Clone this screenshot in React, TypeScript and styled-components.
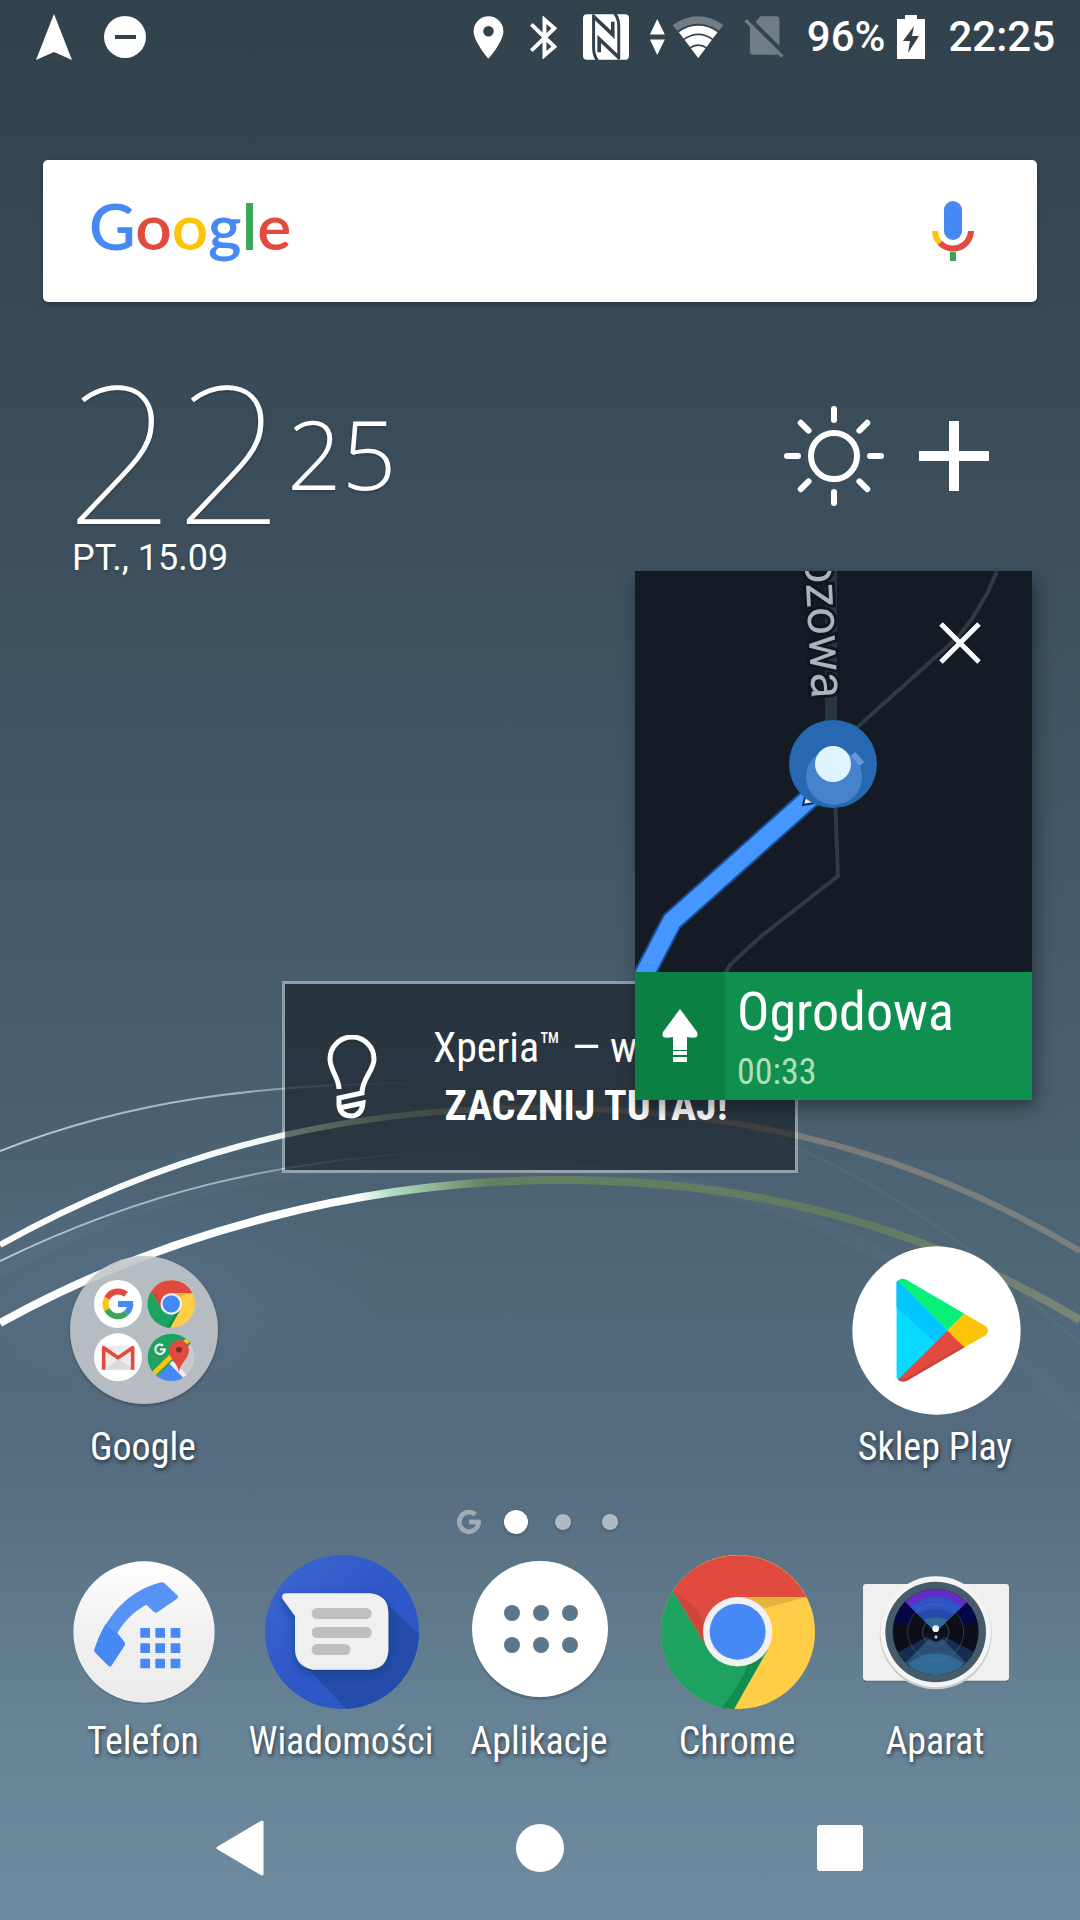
import React from "react";
import styled, { createGlobalStyle } from "styled-components";

const condensed = '"Roboto Condensed", Roboto, "Noto Sans", sans-serif';

const GlobalStyle = createGlobalStyle`
  * { box-sizing: border-box; }
  body { margin: 0; background: #33434d; }
  svg { display: block; flex: none; }
  button { border: 0; padding: 0; margin: 0; background: none; color: inherit; font: inherit; cursor: pointer; }
`;

const Screen = styled.main`
  position: relative;
  isolation: isolate;
  display: flex;
  flex-direction: column;
  min-height: 100vh;
  overflow: hidden;
  color: #fff;
  font-family: Roboto, "Noto Sans", sans-serif;
  background: linear-gradient(#32424c 0%, #3b4c59 22%, #445867 45%, #4a6070 58%, #506878 68%, #566d82 77%, #5c7486 81%, #678396 90%, #6f8b9f 100%);
`;

const Wallpaper = styled.svg`
  position: absolute;
  inset: 0;
  z-index: -1;
  width: 100%;
  height: 100%;
`;

const StatusBar = styled.header`
  display: flex;
  align-items: center;
  justify-content: space-between;
  height: 74px;
  padding: 0 25px 0 36px;
`;

const StatusGroup = styled.div<{ $gap: number }>`
  display: flex;
  align-items: center;
  gap: ${(p) => p.$gap}px;
`;

const StatusText = styled.span`
  font-size: 42px;
  line-height: 48px;
  font-weight: 500;
`;

const SearchBar = styled.form`
  display: flex;
  align-items: center;
  height: 142px;
  margin: 86px 43px 0;
  padding: 0 62px 0 46px;
  border-radius: 5px;
  background: #fff;
  box-shadow: 0 2px 5px rgba(0, 0, 0, 0.3);
`;

const Wordmark = styled.label`
  padding-bottom: 10px;
  font-family: Lato, sans-serif;
  font-size: 64px;
  line-height: 80px;
  font-weight: 600;
`;

const Letter = styled.span<{ $color: string }>`
  color: ${(p) => p.$color};
`;

const SearchInput = styled.input`
  flex: 1;
  min-width: 0;
  height: 80px;
  margin: 0 24px;
  border: 0;
  outline: 0;
  background: transparent;
  font-family: Roboto, sans-serif;
  font-size: 36px;
`;

const ClockWidget = styled.section`
  padding: 0 91px 0 66px;
  margin-top: 82px;
`;

const ClockRow = styled.div`
  display: flex;
  align-items: center;
  height: 144px;
`;

const Hours = styled.span`
  padding-bottom: 12px;
  font-family: "Noto Sans", "Open Sans", sans-serif;
  font-size: 192px;
  line-height: 144px;
  font-weight: 100;
  text-shadow: 0 1px 3px rgba(0, 0, 0, 0.3);
`;

const Minutes = styled.span`
  padding-bottom: 6px;
  margin-left: 2px;
  font-family: "Open Sans", "Noto Sans", sans-serif;
  font-size: 96px;
  line-height: 96px;
  font-weight: 300;
  text-shadow: 0 1px 3px rgba(0, 0, 0, 0.3);
`;

const ClockActions = styled.div`
  display: flex;
  align-items: center;
  gap: 35px;
  margin-left: auto;
`;

const DateLine = styled.p`
  margin: 10px 0 0 6px;
  font-size: 36px;
  line-height: 40px;
  text-shadow: 0 1px 3px rgba(0, 0, 0, 0.3);
`;

const Spacer = styled.div`
  flex: 1;
`;

const TipCard = styled.button`
  display: flex;
  align-items: center;
  align-self: center;
  width: 516px;
  height: 192px;
  padding: 0 56px 0 42px;
  border: 3px solid rgba(255, 255, 255, 0.4);
  background: rgba(20, 27, 34, 0.6);
  background-clip: padding-box;
  color: #fff;
`;

const TipText = styled.span`
  flex: 1;
  display: flex;
  flex-direction: column;
  margin-left: 56px;
  font-family: ${condensed};
  font-size: 42px;
  line-height: 58px;
  white-space: nowrap;
  text-align: left;
`;

const TipStrong = styled.strong`
  text-align: center;
  font-weight: 700;
`;

const AppRow = styled.nav<{ $top: number }>`
  display: grid;
  grid-template-columns: repeat(5, minmax(0, 1fr));
  margin-top: ${(p) => p.$top}px;
  padding: 0 45px;
`;

const AppButton = styled.button<{ $column?: number }>`
  display: flex;
  flex-direction: column;
  align-items: center;
  ${(p) => (p.$column ? `grid-column: ${p.$column};` : "")}
`;

const IconSlot = styled.span<{ $size: number }>`
  display: flex;
  align-items: center;
  justify-content: center;
  height: ${(p) => p.$size}px;
`;

const AppLabel = styled.span`
  margin-top: 8px;
  padding-right: 2px;
  font-family: ${condensed};
  font-size: 38px;
  line-height: 48px;
  white-space: nowrap;
  text-shadow: 1px 2px 4px rgba(0, 0, 0, 0.6);
`;

const Pager = styled.div`
  display: grid;
  grid-template-columns: repeat(4, 47px);
  align-items: center;
  justify-items: center;
  justify-content: center;
  height: 26px;
  margin-top: 38px;
  padding-right: 2px;
`;

const PageDot = styled.button<{ $active?: boolean }>`
  width: ${(p) => (p.$active ? 24 : 16)}px;
  height: ${(p) => (p.$active ? 24 : 16)}px;
  border-radius: 50%;
  background: ${(p) => (p.$active ? "#fff" : "#b0bac3")};
  box-shadow: 0 1px 3px rgba(0, 0, 0, 0.3);
`;

const NavBar = styled.footer`
  display: grid;
  grid-template-columns: repeat(3, 300px);
  justify-content: center;
  align-items: center;
  height: 144px;
  margin-top: 11px;
`;

const NavButton = styled.button`
  display: flex;
  align-items: center;
  justify-content: center;
  height: 100%;
`;

const FloatingMap = styled.aside`
  position: absolute;
  top: 571px;
  right: 48px;
  width: 397px;
  box-shadow: 4px 8px 18px rgba(0, 0, 0, 0.38);
`;

const CloseButton = styled.button`
  position: absolute;
  top: 36px;
  right: 36px;
  display: flex;
  align-items: center;
  justify-content: center;
  width: 72px;
  height: 72px;
`;

const Directions = styled.div`
  display: flex;
  height: 128px;
  background: #0f904f;
`;

const TurnCell = styled.div`
  display: flex;
  align-items: center;
  justify-content: center;
  width: 90px;
  background: #0c8043;
`;

const StreetCell = styled.div`
  padding: 8px 0 0 12px;
  font-family: ${condensed};
`;

const Street = styled.div`
  font-size: 54px;
  line-height: 64px;
`;

const Eta = styled.div`
  font-size: 36px;
  line-height: 56px;
  color: #b0deb9;
`;

const BLUE = "#4688f4";
const RED = "#e04a3f";
const YELLOW = "#fdc409";
const GREEN = "#3aa757";

function WallpaperArt() {
  return (
    <Wallpaper viewBox="0 0 1080 1920" preserveAspectRatio="none" aria-hidden="true">
      <defs>
        <linearGradient id="arcThin" gradientUnits="userSpaceOnUse" x1="0" y1="0" x2="480" y2="0">
          <stop offset="0" stopColor="#b9c5cf" />
          <stop offset="0.5" stopColor="#9fb2c1" />
          <stop offset="1" stopColor="#51697c" stopOpacity="0" />
        </linearGradient>
        <linearGradient id="arcUpper" gradientUnits="userSpaceOnUse" x1="0" y1="0" x2="1080" y2="0">
          <stop offset="0" stopColor="#fff" />
          <stop offset="0.25" stopColor="#f2f6f4" />
          <stop offset="0.36" stopColor="#8ea48d" />
          <stop offset="0.48" stopColor="#7b7772" />
          <stop offset="1" stopColor="#7c7f7f" />
        </linearGradient>
        <linearGradient id="arcLower" gradientUnits="userSpaceOnUse" x1="0" y1="0" x2="1080" y2="0">
          <stop offset="0" stopColor="#fff" />
          <stop offset="0.33" stopColor="#fff" />
          <stop offset="0.36" stopColor="#b5e0c8" />
          <stop offset="0.45" stopColor="#64805f" />
          <stop offset="0.8" stopColor="#607a62" />
          <stop offset="1" stopColor="#7b8578" />
        </linearGradient>
        <radialGradient id="glow">
          <stop offset="0" stopColor="#5d7695" stopOpacity="0.4" />
          <stop offset="1" stopColor="#5d7695" stopOpacity="0" />
        </radialGradient>
      </defs>
      <ellipse cx="130" cy="1280" rx="260" ry="110" fill="url(#glow)" />
      <g fill="none">
        <path d="M0 1272C160 1180 330 1152 540 1166S900 1225 1080 1420" stroke="#6b8799" strokeOpacity="0.12" strokeWidth="12" />
        <path d="M700 1110C850 1160 960 1230 1080 1345" stroke="#6f8ba0" strokeOpacity="0.16" strokeWidth="3" />
        <path d="M0 1151C120 1104 250 1080 480 1083" stroke="url(#arcThin)" strokeWidth="2" />
        <path d="M0 1261C130 1198 270 1156 480 1150" stroke="url(#arcThin)" strokeWidth="2" />
        <path d="M0 1245C150 1161 320 1108 540 1108S930 1160 1080 1251" stroke="url(#arcUpper)" strokeWidth="6" />
        <path d="M0 1323C170 1229 370 1180 560 1180S920 1224 1080 1320" stroke="url(#arcLower)" strokeWidth="8" />
      </g>
    </Wallpaper>
  );
}

/* Multi-coloured G mark; centred on 0,0 with an outer radius of 46. */
function GMark({ colors }: { colors: [string, string, string, string] }) {
  const [red, yellow, green, blue] = colors;
  return (
    <g fill="none" strokeWidth="18">
      <path d="M24 -29A37 37 0 0 0 -33 -17" stroke={red} />
      <path d="M-33 -17A37 37 0 0 0 -33 17" stroke={yellow} />
      <path d="M-33 17A37 37 0 0 0 24 28" stroke={green} />
      <path d="M24 28A37 37 0 0 0 37 0" stroke={blue} />
      <path d="M0 0H45" stroke={blue} />
    </g>
  );
}

/* Chrome mark; centred on 595,426 with a radius of 231. */
function ChromeMark() {
  return (
    <g>
      <circle cx="595" cy="426" r="231" fill="#ffcd46" />
      <path d="M400 302L505 478L595 530L685 478L583 657A231 231 0 0 1 400 302Z" fill="#1da260" />
      <path d="M400 302A231 231 0 0 1 800 321H595V426L505 478Z" fill="#e04a3f" />
      <path d="M595 321H800L670 356Z" fill="#dcae3c" opacity="0.8" />
      <path d="M400 302L495 460L490 420Q492 370 440 330Z" fill="#b9423a" opacity="0.5" />
      <path d="M672 500L583 657L545 655Q600 590 625 522Z" fill="#0a864a" opacity="0.7" />
      <circle cx="594" cy="425" r="104" fill="#f1f1f1" />
      <circle cx="594" cy="425" r="84" fill="#4688f4" />
    </g>
  );
}

function FolderIcon() {
  return (
    <svg width="148" height="148" viewBox="90 79 444 444" overflow="visible">
      <defs>
        <clipPath id="mapsClip"><circle cx="394" cy="383" r="71" /></clipPath>
        <filter id="soft" x="-20%" y="-20%" width="140%" height="140%">
          <feDropShadow dx="0" dy="4" stdDeviation="5" floodOpacity="0.35" />
        </filter>
      </defs>
      <circle cx="312" cy="301" r="222" fill="#c5c9cd" fillOpacity="0.86" filter="url(#soft)" />
      <circle cx="234" cy="223" r="72" fill="#fff" />
      <g transform="translate(234 223)"><GMark colors={[RED, YELLOW, GREEN, BLUE]} /></g>
      <g transform="translate(394 223) scale(0.309) translate(-595 -426)"><ChromeMark /></g>
      <circle cx="234" cy="383" r="72" fill="#fff" />
      <path d="M186 348H282V420H186Z" fill="#ececec" />
      <path d="M196 420L234 388L282 420Z" fill="#dcdcdc" />
      <path d="M191 420V354L234 384L278 354V420" fill="none" stroke={RED} strokeWidth="11" strokeLinejoin="round" />
      <g clipPath="url(#mapsClip)">
        <rect x="320" y="310" width="148" height="148" fill="#1da260" />
        <path d="M345 458L480 310V458Z" fill="#c8cacc" />
        <path d="M345 445L395 398L455 458H330Z" fill="#4688f4" />
        <path d="M340 433L450 325" stroke={YELLOW} strokeWidth="15" />
        <path d="M393 398L450 455" stroke="#eee" strokeWidth="13" />
        <path d="M417 428C413 398 387 388 387 361A30 30 0 0 1 447 361C447 388 421 398 417 428Z" fill={RED} />
        <circle cx="417" cy="360" r="9" fill="#77322e" />
        <g transform="translate(360 359) scale(0.38)"><GMark colors={["#eee", "#eee", "#eee", "#eee"]} /></g>
      </g>
    </svg>
  );
}

function PlayStoreIcon() {
  return (
    <svg width="169" height="169" viewBox="94 77 508 508">
      <circle cx="348" cy="331" r="253" fill="#fff" />
      <path d="M228 187Q228 180 234 182L381 331L236 478Q228 480 228 470Z" fill="#06dbff" />
      <path d="M228 187Q228 180 234 182L381 331L345 367L228 262Z" fill="#03c5ff" />
      <path d="M232 181Q242 172 256 178L432 281L381 331Z" fill="#08ef7a" />
      <path d="M432 281L496 318Q510 331 496 345L432 381L381 331Z" fill={YELLOW} />
      <path d="M381 331L432 381L260 481Q244 488 232 479Z" fill={RED} />
      <path d="M428 377L432 381L260 481Q244 488 232 479L240 474Q248 479 258 474Z" fill="#c7443a" />
    </svg>
  );
}

function PhoneIcon() {
  return (
    <svg width="142" height="142" viewBox="98 213 426 426" overflow="visible">
      <defs>
        <linearGradient id="phoneFace" x1="0" y1="0" x2="0" y2="1">
          <stop offset="0" stopColor="#fff" /><stop offset="0.5" stopColor="#f0f0f0" /><stop offset="1" stopColor="#ececec" />
        </linearGradient>
      </defs>
      <circle cx="311" cy="429" r="213" fill="#3f5362" opacity="0.35" />
      <circle cx="311" cy="426" r="212" fill="url(#phoneFace)" />
      <path d="M358 278Q367 274 374 281L411 316Q416 321 409 327L351 367Q346 370 341 366L318 344C280 364 248 397 231 430L252 456Q256 461 252 467L213 527Q208 532 203 526L164 487Q160 482 163 476C200 370 270 300 358 278Z" fill="#5792f5" />
      <path d="M195 403L231 430L252 456Q256 461 252 467L213 527Q208 532 203 526L164 487Q160 482 163 476Q175 438 195 403Z" fill={BLUE} />
      {[414, 460, 506].map((y) =>
        [300, 345, 391].map((x) => <rect key={`${x}-${y}`} x={x} y={y} width="29" height="29" rx="2" fill={BLUE} />)
      )}
    </svg>
  );
}

function MessagesIcon() {
  return (
    <svg width="154" height="154" viewBox="675 195 462 462">
      <defs>
        <clipPath id="msgClip"><circle cx="906" cy="426" r="231" /></clipPath>
        <linearGradient id="msgFace" x1="0" y1="0" x2="1" y2="1">
          <stop offset="0" stopColor="#3d68ce" /><stop offset="0.5" stopColor="#2e57c8" />
        </linearGradient>
        <filter id="msgShadow" x="-20%" y="-20%" width="140%" height="150%">
          <feDropShadow dx="0" dy="12" stdDeviation="14" floodColor="#123a7a" floodOpacity="0.6" />
        </filter>
      </defs>
      <g clipPath="url(#msgClip)">
        <rect x="675" y="195" width="462" height="462" fill="url(#msgFace)" />
        <path d="M1030 330L1170 465V690H950L790 522Z" fill="#244ca9" />
        <path d="M738 310H990Q1045 316 1045 368V484Q1040 538 985 539H820Q768 530 765 480V378L728 327Q722 312 738 310Z" fill="#f0f0f0" filter="url(#msgShadow)" />
        <rect x="815" y="354" width="180" height="33" rx="16" fill="#bfbfbf" />
        <rect x="815" y="411" width="180" height="33" rx="16" fill="#bfbfbf" />
        <rect x="815" y="462" width="116" height="33" rx="16" fill="#bfbfbf" />
      </g>
    </svg>
  );
}

function AppsIcon() {
  return (
    <svg width="136" height="142" viewBox="0 0 136 142" overflow="visible">
      <circle cx="68" cy="71" r="68" fill="#3c4f5d" opacity="0.4" />
      <circle cx="68" cy="68" r="68" fill="#fff" />
      {[52, 84].map((y) =>
        [40, 69, 98].map((x) => <circle key={`${x}-${y}`} cx={x} cy={y} r="8" fill="#5d788a" />)
      )}
    </svg>
  );
}

function CameraIcon() {
  return (
    <svg width="146" height="112" viewBox="969 258 438 336" overflow="visible">
      <defs>
        <clipPath id="lensClip"><circle cx="1187" cy="426" r="129" /></clipPath>
      </defs>
      <rect x="969" y="286" width="438" height="290" rx="10" fill="#40525e" opacity="0.4" />
      <rect x="969" y="282" width="438" height="290" rx="10" fill="#f0f0f0" />
      <circle cx="1187" cy="430" r="168" fill="#c9ccce" />
      <circle cx="1187" cy="425" r="166" fill="#f4f4f4" />
      <circle cx="1187" cy="426" r="151" fill="#465b69" />
      <g clipPath="url(#lensClip)">
        <rect x="1050" y="290" width="280" height="270" fill="#0d0f18" />
        <path d="M1187 426L1050 290V390ZM1187 426L1330 290V390Z" fill="#060646" />
        <circle cx="1187" cy="426" r="84" fill="#0d0f18" />
        <path d="M1187 426L1050 290H1330Z" fill="#622dc4" />
        <path d="M1187 426L1110 350Q1187 290 1266 350Z" fill="#2c55c4" />
        <path d="M1187 426L1134 373Q1187 342 1240 373Z" fill="#2449ab" />
        <path d="M1187 426L1150 390Q1187 374 1224 390Z" fill="#2f6c9c" />
        <path d="M1187 426L1050 500V570H1330V500Z" fill="#182c50" />
        <path d="M1187 426L1085 530Q1187 600 1290 530Z" fill="#2a4e78" />
        <path d="M1105 520Q1187 460 1270 520L1240 560H1135Z" fill="#316b95" />
        <circle cx="1187" cy="426" r="84" fill="none" stroke="#6a7d90" strokeOpacity="0.4" strokeWidth="3" />
        <circle cx="1187" cy="426" r="39" fill="none" stroke="#4b5f78" strokeOpacity="0.5" strokeWidth="4" />
        <path d="M1187 426L1155 430Q1187 480 1222 430Z" fill="#0d1420" />
      </g>
      <circle cx="1187" cy="416" r="10" fill="#e8f4ff" />
      <circle cx="1188" cy="441" r="5" fill="#a8c4d8" />
    </svg>
  );
}

function StatusIcons() {
  return (
    <StatusGroup $gap={20}>
      <StatusGroup $gap={26}>
        <svg width="31" height="43" viewBox="37 44 92 130">
          <path fillRule="evenodd" d="M83 45A45 45 0 0 0 38 90C38 122 83 173 83 173S128 122 128 90A45 45 0 0 0 83 45ZM83 74A16 16 0 1 1 83 106A16 16 0 0 1 83 74Z" fill="#fff" />
        </svg>
        <svg width="27" height="43" viewBox="202 44 82 130">
          <path d="M206 69L276 137L246 163V55L276 81L206 149" fill="none" stroke="#fff" strokeWidth="12" />
        </svg>
        <svg width="46" height="46" viewBox="362 39 139 138">
          <rect x="362" y="39" width="139" height="138" rx="12" fill="#fff" />
          <g fill="none" stroke="#32424c" strokeWidth="9">
            <path d="M394 40V140Q394 165 406 179" />
            <path d="M470 176V76Q470 52 458 37" />
            <path d="M394 46L452 101V62" strokeWidth="11" />
            <path d="M470 170L411 114V154" strokeWidth="11" />
          </g>
        </svg>
      </StatusGroup>
      <svg width="75" height="43" viewBox="562 43 225 130">
        <path d="M586 52L609 99H564ZM586 161L609 114H564Z" fill="#fff" />
        <path d="M633 70Q710 18 786 70L710 170Z" fill="#707d84" />
        <path d="M652 92Q710 52 768 92L710 170Z" fill="#fff" />
        <path d="M645 92Q710 46 775 92M664 115Q710 82 756 115M683 141Q710 121 737 141" fill="none" stroke="#32424c" strokeWidth="5" />
      </svg>
      <svg width="40" height="42" viewBox="844 47 119 127">
        <path d="M893 48H940Q950 48 950 58V137L878 65ZM861 78L947 164H871Q861 164 861 154Z" fill="#707d84" />
        <path d="M848 60L959 170" stroke="#707d84" strokeWidth="10" />
      </svg>
    </StatusGroup>
  );
}

function MapArt() {
  return (
    <svg width="397" height="401" viewBox="0 0 397 401">
      <rect width="397" height="401" fill="#141b25" />
      <g fill="none" stroke="#2f3b44" strokeWidth="4">
        <path d="M362 0L353 21L337 48L323 66L218 160L198 193" />
        <path d="M200 225L203 305L125 366L95 394L90 403" />
      </g>
      <path d="M196 0V160" stroke="#2a363e" strokeWidth="12" />
      <text
        transform="translate(177 128) rotate(87)"
        textAnchor="end"
        fontFamily="Roboto, sans-serif"
        fontSize="49"
        fill="#a9b4bb"
        stroke="#10161e"
        strokeWidth="6"
        paintOrder="stroke"
      >
        Brzozowa
      </text>
      <path d="M185 218L37 350L8 406" fill="none" stroke="#1d4b96" strokeWidth="22" />
      <path d="M185 218L37 350L8 406" fill="none" stroke="#4696ff" strokeWidth="18" />
      <path d="M168 234L171 222L179 232Z" fill="#d9ecf8" stroke="#132b55" strokeWidth="2" />
      <circle cx="198" cy="193" r="44" fill="#2668b2" />
      <circle cx="199" cy="206" r="28" fill="#4583cc" />
      <path d="M218 183L227 193" stroke="#6298dc" strokeWidth="6" />
      <circle cx="198" cy="193" r="18" fill="#e0f4ff" />
    </svg>
  );
}

export default function App() {
  return (
    <>
      <GlobalStyle />
      <Screen>
        <WallpaperArt />
        <StatusBar>
          <StatusGroup $gap={32}>
            <svg width="36" height="46" viewBox="0 0 36 46"><path d="M18 0L36 46L18 38L0 46Z" fill="#fff" /></svg>
            <svg width="43" height="43" viewBox="0 0 43 43">
              <circle cx="21" cy="21" r="21" fill="#fff" />
              <rect x="11" y="19" width="21" height="4" fill="#32424c" />
            </svg>
          </StatusGroup>
          <StatusGroup $gap={23}>
            <StatusIcons />
            <StatusGroup $gap={12}>
              <StatusText>96%</StatusText>
              <svg width="28" height="44" viewBox="0 0 28 44">
                <path d="M8 0H20V4H28V44H0V4H8Z" fill="#fff" />
                <path d="M17 11L6 26H13L11 38L22 21H15Z" fill="#32424c" />
              </svg>
            </StatusGroup>
            <StatusText>22:25</StatusText>
          </StatusGroup>
        </StatusBar>

        <SearchBar onSubmit={(e) => e.preventDefault()}>
          <Wordmark htmlFor="query">
            <Letter $color={BLUE}>G</Letter>
            <Letter $color={RED}>o</Letter>
            <Letter $color={YELLOW}>o</Letter>
            <Letter $color={BLUE}>g</Letter>
            <Letter $color={GREEN}>l</Letter>
            <Letter $color={RED}>e</Letter>
          </Wordmark>
          <SearchInput id="query" type="text" />
          <button type="button" aria-label="Mikrofon">
            <svg width="44" height="60" viewBox="0 0 44 60">
              <rect x="13" y="0" width="18" height="39" rx="9" fill={BLUE} />
              <path d="M4 30A18 18 0 0 0 9 42" fill="none" stroke={YELLOW} strokeWidth="6" />
              <path d="M9 42A18 18 0 0 0 40 30" fill="none" stroke={RED} strokeWidth="6" />
              <rect x="19" y="51" width="6" height="9" fill={GREEN} />
            </svg>
          </button>
        </SearchBar>

        <ClockWidget>
          <ClockRow>
            <Hours>22</Hours>
            <Minutes>25</Minutes>
            <ClockActions>
              <button type="button" aria-label="Pogoda">
                <svg width="100" height="100" viewBox="-50 -50 100 100">
                  <circle r="23" fill="none" stroke="#fff" strokeWidth="6" />
                  <g stroke="#fff" strokeWidth="6" strokeLinecap="round">
                    {[0, 45, 90, 135, 180, 225, 270, 315].map((a) => (
                      <path key={a} d="M36 0H47" transform={`rotate(${a})`} />
                    ))}
                  </g>
                </svg>
              </button>
              <button type="button" aria-label="Dodaj">
                <svg width="70" height="70" viewBox="0 0 70 70"><path d="M30 0H40V30H70V40H40V70H30V40H0V30H30Z" fill="#fff" /></svg>
              </button>
            </ClockActions>
          </ClockRow>
          <DateLine>PT., 15.09</DateLine>
        </ClockWidget>

        <Spacer />

        <TipCard type="button">
          <svg width="50" height="84" viewBox="0 0 50 84">
            <g fill="none" stroke="#fff" strokeWidth="5">
              <path d="M12 54C12 43 3 35 3 24A22 22 0 0 1 47 24C47 36 35 43 35 58L12 63V70Q13 81 25 81Q35 80 36 68L12 73" />
            </g>
          </svg>
          <TipText>
            <span>Xperia™ — w</span>
            <TipStrong>ZACZNIJ TUTAJ!</TipStrong>
          </TipText>
        </TipCard>

        <AppRow $top={72}>
          <AppButton type="button" $column={1}>
            <IconSlot $size={170}><FolderIcon /></IconSlot>
            <AppLabel>Google</AppLabel>
          </AppButton>
          <AppButton type="button" $column={5}>
            <IconSlot $size={170}><PlayStoreIcon /></IconSlot>
            <AppLabel>Sklep Play</AppLabel>
          </AppButton>
        </AppRow>

        <Pager>
          <svg width="24" height="24" viewBox="-46 -46 92 92">
            <GMark colors={["#a0abb5", "#a0abb5", "#a0abb5", "#a0abb5"]} />
          </svg>
          <PageDot type="button" $active aria-label="Strona 1" />
          <PageDot type="button" aria-label="Strona 2" />
          <PageDot type="button" aria-label="Strona 3" />
        </Pager>

        <AppRow $top={20}>
          <AppButton type="button">
            <IconSlot $size={154}><PhoneIcon /></IconSlot>
            <AppLabel>Telefon</AppLabel>
          </AppButton>
          <AppButton type="button">
            <IconSlot $size={154}><MessagesIcon /></IconSlot>
            <AppLabel>Wiadomości</AppLabel>
          </AppButton>
          <AppButton type="button">
            <IconSlot $size={154}><AppsIcon /></IconSlot>
            <AppLabel>Aplikacje</AppLabel>
          </AppButton>
          <AppButton type="button">
            <IconSlot $size={154}>
              <svg width="154" height="154" viewBox="364 195 462 462"><ChromeMark /></svg>
            </IconSlot>
            <AppLabel>Chrome</AppLabel>
          </AppButton>
          <AppButton type="button">
            <IconSlot $size={154}><CameraIcon /></IconSlot>
            <AppLabel>Aparat</AppLabel>
          </AppButton>
        </AppRow>

        <NavBar>
          <NavButton type="button" aria-label="Wstecz">
            <svg width="48" height="56" viewBox="0 0 48 56"><path d="M2 28L46 2V54Z" fill="#fff" stroke="#fff" strokeWidth="3" strokeLinejoin="round" /></svg>
          </NavButton>
          <NavButton type="button" aria-label="Ekran główny">
            <svg width="48" height="48" viewBox="0 0 48 48"><circle cx="24" cy="24" r="24" fill="#fff" /></svg>
          </NavButton>
          <NavButton type="button" aria-label="Ostatnie">
            <svg width="46" height="46" viewBox="0 0 46 46"><rect width="46" height="46" rx="3" fill="#fff" /></svg>
          </NavButton>
        </NavBar>

        <FloatingMap>
          <MapArt />
          <CloseButton type="button" aria-label="Zamknij">
            <svg width="42" height="42" viewBox="0 0 42 42"><path d="M2 2L40 40M40 2L2 40" stroke="#fff" strokeWidth="5" /></svg>
          </CloseButton>
          <Directions>
            <TurnCell>
              <svg width="36" height="54" viewBox="0 0 36 54">
                <path d="M18 0L35 23Q38 31 25 28V41H11V28Q-2 31 1 23ZM11 42H25V46H11ZM11 48H25V53H11Z" fill="#fff" />
              </svg>
            </TurnCell>
            <StreetCell>
              <Street>Ogrodowa</Street>
              <Eta>00:33</Eta>
            </StreetCell>
          </Directions>
        </FloatingMap>
      </Screen>
    </>
  );
}
